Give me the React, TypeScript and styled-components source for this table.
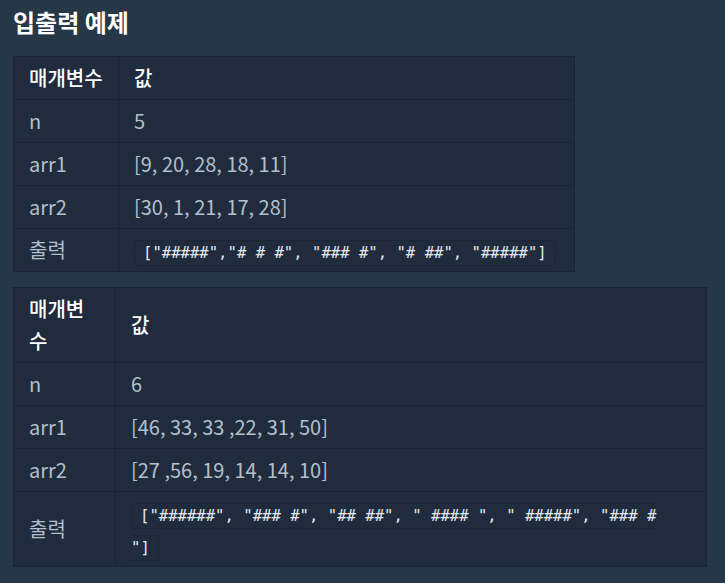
import styled, { createGlobalStyle } from 'styled-components';

const GlobalStyle = createGlobalStyle`
  html, body {
    margin: 0;
    padding: 0;
    background: #263747;
  }
  body {
    font-family: "Noto Sans CJK KR", "Noto Sans", sans-serif;
    color: #b2c0cc;
  }
`;

const Page = styled.main`
  padding: 4px 18px 16px 13px;
`;

const Heading = styled.h5`
  margin: 0 0 16px 0;
  font-size: 24px;
  line-height: 36px;
  font-weight: 700;
  color: #ffffff;
`;

const Table = styled.table<{ $width: number }>`
  width: ${(p) => p.$width}px;
  table-layout: fixed;
  border-collapse: collapse;
  background: #202b3d;
  border: 1px solid #172334;
  margin-bottom: 15px;
  font-size: 20px;
`;

const Col = styled.col<{ $width?: number }>`
  width: ${(p) => (p.$width ? `${p.$width}px` : 'auto')};
`;

const Th = styled.th`
  text-align: left;
  font-weight: 500;
  color: #ffffff;
  line-height: 32px;
  padding: 5px 15px;
  border: 1px solid #172334;
`;

const Td = styled.td`
  line-height: 32px;
  padding: 5px 15px;
  border: 1px solid #172334;
  color: #b2c0cc;
`;

const Code = styled.code`
  font-family: "DejaVu Sans Mono", monospace;
  font-size: 15.6px;
  line-height: 18px;
  color: #e3eaf2;
  background: #202b3d;
  border: 1px solid #1a2536;
  border-radius: 5px;
  padding: 3px 8px;
`;

type Example = {
  n: number;
  arr1: string;
  arr2: string;
  output: string;
};

const examples: { width: number; firstCol: number; data: Example }[] = [
  {
    width: 562,
    firstCol: 105,
    data: {
      n: 5,
      arr1: '[9, 20, 28, 18, 11]',
      arr2: '[30, 1, 21, 17, 28]',
      output: '["#####","# # #", "### #", "#  ##", "#####"]',
    },
  },
  {
    width: 694,
    firstCol: 102,
    data: {
      n: 6,
      arr1: '[46, 33, 33 ,22, 31, 50]',
      arr2: '[27 ,56, 19, 14, 14, 10]',
      output: '["######", "###  #", "##  ##", " #### ", " #####", "### # "]',
    },
  },
];

const ExampleTable = ({ width, firstCol, data }: (typeof examples)[number]) => (
  <Table $width={width}>
    <colgroup>
      <Col $width={firstCol} />
      <Col />
    </colgroup>
    <thead>
      <tr>
        <Th>매개변수</Th>
        <Th>값</Th>
      </tr>
    </thead>
    <tbody>
      <tr>
        <Td>n</Td>
        <Td>{data.n}</Td>
      </tr>
      <tr>
        <Td>arr1</Td>
        <Td>{data.arr1}</Td>
      </tr>
      <tr>
        <Td>arr2</Td>
        <Td>{data.arr2}</Td>
      </tr>
      <tr>
        <Td>출력</Td>
        <Td>
          <Code>{data.output}</Code>
        </Td>
      </tr>
    </tbody>
  </Table>
);

export default function App() {
  return (
    <>
      <GlobalStyle />
      <Page>
        <Heading>입출력 예제</Heading>
        {examples.map((ex) => (
          <ExampleTable key={ex.width} {...ex} />
        ))}
      </Page>
    </>
  );
}
